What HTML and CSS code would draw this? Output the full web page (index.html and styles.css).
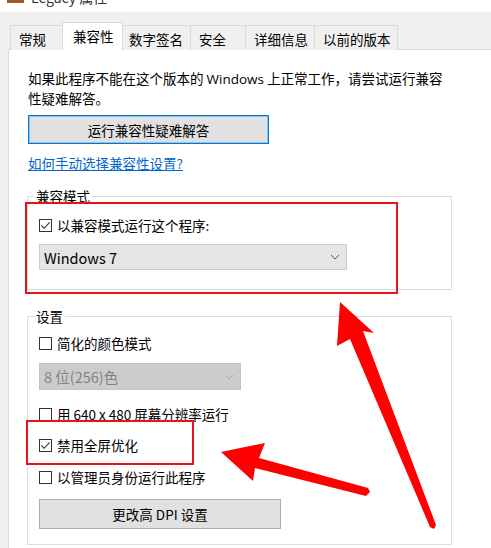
FILE: index.html
```html
<!DOCTYPE html>
<html>
<head>
<meta charset="utf-8">
<link rel="stylesheet" href="styles.css">
</head>
<body>
<div class="titlebar">
  <span class="app-icon"></span>
  <span class="title-text">Legacy 属性</span>
</div>
<div class="tabs">
  <div class="tab w-general">常规</div>
  <div class="tab tab-active w-compat">兼容性</div>
  <div class="tab w-sign">数字签名</div>
  <div class="tab w-sec">安全</div>
  <div class="tab w-detail">详细信息</div>
  <div class="tab w-prev">以前的版本</div>
</div>
<div class="panel">
  <p class="intro">如果此程序不能在这个版本的 <span class="latin">Windows</span> 上正常工作，请尝试运行兼容<br>性疑难解答。</p>
  <div class="btn btn-focus btn-trouble">运行兼容性疑难解答</div>
  <a class="link" href="#">如何手动选择兼容性设置?</a>

  <fieldset class="group group-compat">
    <legend>兼容模式</legend>
    <div class="check-row first-row">
      <span class="checkbox checked"><svg viewBox="0 0 13 13" width="13" height="13"><path d="M2.5 6.5 L5.2 9.3 L10.6 3.3" fill="none" stroke="#333" stroke-width="1.1"/></svg></span>
      <span>以兼容模式运行这个程序:</span>
    </div>
    <div class="select select-win">
      <span class="select-text">Windows 7</span>
      <svg class="chev" viewBox="0 0 10 6" width="10" height="6"><path d="M1 1 L5 5 L9 1" fill="none" stroke="#555" stroke-width="1"/></svg>
    </div>
  </fieldset>

  <fieldset class="group group-settings">
    <legend>设置</legend>
    <div class="check-row row-a">
      <span class="checkbox"></span>
      <span>简化的颜色模式</span>
    </div>
    <div class="select select-color disabled">
      <span class="select-text">8 位(256)色</span>
      <svg class="chev" viewBox="0 0 10 6" width="10" height="6"><path d="M1 1 L5 5 L9 1" fill="none" stroke="#aaa" stroke-width="1"/></svg>
    </div>
    <div class="check-row row-b">
      <span class="checkbox"></span>
      <span>用 640 x 480 屏幕分辨率运行</span>
    </div>
    <div class="check-row row-c">
      <span class="checkbox checked"><svg viewBox="0 0 13 13" width="13" height="13"><path d="M2.5 6.5 L5.2 9.3 L10.6 3.3" fill="none" stroke="#333" stroke-width="1.1"/></svg></span>
      <span>禁用全屏优化</span>
    </div>
    <div class="check-row row-d">
      <span class="checkbox"></span>
      <span>以管理员身份运行此程序</span>
    </div>
    <div class="btn btn-dpi">更改高 DPI 设置</div>
  </fieldset>
</div>

<div class="redbox redbox-1"></div>
<div class="redbox redbox-2"></div>
<svg class="arrows" viewBox="0 0 491 548" width="491" height="548">
  <polygon fill="#ff0000" points="340,302 374,333 363,331 436,525 434,529 430,527 350,339 337,346"/>
  <polygon fill="#ff0000" points="221,452 265,443 259,458 368,488 370,492 366,496 255,468 253,481"/>
</svg>
</body>
</html>
```

FILE: styles.css
```css
html, body {
  margin: 0;
  padding: 0;
}
body {
  width: 491px;
  height: 548px;
  overflow: hidden;
  background: #f0f0f0;
  font-family: "Noto Sans CJK SC", "Noto Sans", sans-serif;
  font-size: 13.5px;
  color: #000;
  position: relative;
}
.titlebar {
  height: 12px;
  background: #fff;
  display: flex;
  align-items: flex-start;
  overflow: hidden;
}
.app-icon {
  display: block;
  width: 17px;
  height: 3px;
  margin-left: 7px;
  background: #a4581f;
}
.title-text {
  display: block;
  margin-left: 7px;
  margin-top: -10px;
  font-size: 14px;
  line-height: 14px;
  color: #333;
}
.tabs {
  display: flex;
  align-items: flex-end;
  margin-top: 10px;
  margin-left: 10px;
  height: 28px;
  position: relative;
  z-index: 2;
  margin-bottom: -1px;
}
.tab {
  box-sizing: border-box;
  height: 25px;
  border: 1px solid #d9d9d9;
  border-bottom: none;
  background: #f0f0f0;
  padding-left: 8px;
  line-height: 27px;
  margin-left: -1px;
  white-space: nowrap;
}
.tab:first-child { margin-left: 0; }
.tab-active {
  height: 28px;
  background: #fff;
  line-height: 26px;
  padding-left: 10px;
}
.w-general { width: 53px; }
.w-compat { width: 61px; }
.w-sign { width: 69px; padding-left: 6px; }
.w-sec { width: 56px; }
.w-detail { width: 70px; }
.w-prev { width: 84px; }

.panel {
  margin-left: 8px;
  background: #fff;
  border-top: 1px solid #d9d9d9;
  border-left: 1px solid #d9d9d9;
  height: 499px;
  padding: 19px 0 0 19px;
  box-sizing: border-box;
  overflow: hidden;
}
.intro {
  margin: 0;
  line-height: 19px;
  white-space: nowrap;
}
.latin {
  font-family: "Open Sans", "Noto Sans CJK SC", sans-serif;
  font-size: 13.5px;
}
.btn {
  box-sizing: border-box;
  display: flex;
  align-items: center;
  justify-content: center;
  background: #e1e1e1;
  border: 1px solid #adadad;
}
.btn-trouble {
  margin-top: 7px;
  width: 241px;
  height: 29px;
}
.btn-focus {
  border: 1px solid #0078d7;
  box-shadow: inset 0 0 0 1px #8fc1ea;
}
.link {
  display: block;
  margin-top: 10px;
  line-height: 19px;
  color: #0066cc;
  text-decoration: underline;
  width: max-content;
}
.group {
  margin: 0 0 0 -1px;
  width: 425px;
  box-sizing: border-box;
  border: 1px solid #dcdcdc;
  padding: 0 11px 0 11px;
  min-width: 0;
}
.group legend {
  padding: 0 2px;
  margin-left: -5px;
  line-height: 19px;
}
.group-compat {
  margin-top: 14px;
  padding-bottom: 19px;
}
.group-settings {
  margin-top: 17px;
  padding-bottom: 15px;
}
.check-row {
  display: flex;
  align-items: center;
  gap: 5px;
  height: 19px;
  line-height: 19px;
}
.first-row { margin-top: 10px; }
.row-a { margin-top: 8px; }
.row-b { margin-top: 15px; }
.row-c { margin-top: 12px; }
.row-d { margin-top: 13px; }
.checkbox {
  box-sizing: border-box;
  width: 13px;
  height: 13px;
  border: 1px solid #333;
  background: #fff;
  position: relative;
  flex: none;
}
.checkbox svg {
  position: absolute;
  left: -1px;
  top: -1px;
}
.select {
  box-sizing: border-box;
  display: flex;
  align-items: center;
  justify-content: space-between;
  border: 1px solid #cccccc;
  background: #e5e5e5;
  padding: 0 6px 0 4px;
}
.select-win {
  margin-top: 9px;
  width: 308px;
  height: 26px;
}
.select-text {
  font-size: 14.5px;
}
.select-color {
  margin-top: 10px;
  width: 202px;
  height: 27px;
}
.disabled {
  background: #cccccc;
  border-color: #c4c4c4;
  color: #838383;
}
.btn-dpi {
  margin-top: 12px;
  width: 242px;
  height: 30px;
}
.redbox {
  position: absolute;
  box-sizing: border-box;
  border: 2px solid #e8121c;
}
.redbox-1 {
  left: 25px;
  top: 202px;
  width: 373px;
  height: 92px;
}
.redbox-2 {
  left: 26px;
  top: 420px;
  width: 168px;
  height: 45px;
}
.arrows {
  position: absolute;
  left: 0;
  top: 0;
  pointer-events: none;
}
```
